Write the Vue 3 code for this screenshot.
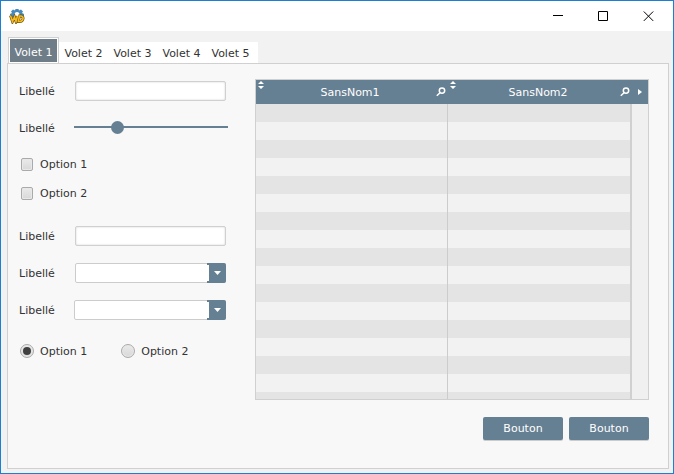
<script setup>
import { ref } from 'vue'

const tabs = ['Volet 1', 'Volet 2', 'Volet 3', 'Volet 4', 'Volet 5']
const activeTab = ref(0)
const columns = ['SansNom1', 'SansNom2']
const rowCount = 17
const name = ref('')
const level = ref(26)
const checks = ref([false, false])
const detail = ref('')
const firstChoice = ref('')
const secondChoice = ref('')
const radio = ref(1)
</script>

<template>
  <div class="window">
    <header class="titlebar">
      <svg class="logo" viewBox="0 0 16 16" aria-hidden="true">
        <path
          d="M6.500 1H9.500L10 2.500L12 1.500L14 3.500L13 5L15 6V8.500L13 9H3L1 8.500V6L3 5L2 3.500L4 1.500L6 2.500Z"
          fill="#4589bd"
        />
        <circle cx="8" cy="6.500" r="2.500" fill="#fff" />
        <path d="M1.500 7.500L3.500 13.500L5.500 9L7 13.500L8.500 8M9.500 8H12C15.200 8 14.700 13.500 10.500 13.500H9.300L10.500 8" fill="none" stroke="#654b08" stroke-width="2.800" />
        <path d="M1.500 7.500L3.500 13.500L5.500 9L7 13.500L8.500 8M9.500 8H12C15.200 8 14.700 13.500 10.500 13.500H9.300L10.500 8" fill="none" stroke="#f6bb20" stroke-width="1.600" />
      </svg>
      <div class="window-actions">
        <button type="button" aria-label="Réduire">
          <svg viewBox="0 0 11 11"><path d="M0 4.500H10" /></svg>
        </button>
        <button type="button" aria-label="Agrandir">
          <svg viewBox="0 0 11 11"><path d="M.5.5H9.500V9.500H.5Z" /></svg>
        </button>
        <button type="button" aria-label="Fermer">
          <svg viewBox="0 0 11 11"><path d="M.8.5L10.200 9.900M10.200.5L.8 9.900" /></svg>
        </button>
      </div>
    </header>

    <main class="body">
      <nav class="tabs" role="tablist">
        <button
          v-for="(tab, i) in tabs"
          :key="tab"
          type="button"
          role="tab"
          class="tab"
          :class="{ active: i === activeTab }"
          :aria-selected="i === activeTab"
          @click="activeTab = i"
        >{{ tab }}</button>
      </nav>

      <section class="panel">
        <form class="form" @submit.prevent>
          <div class="group">
            <div class="field">
              <label for="name">Libellé</label>
              <input id="name" v-model="name" class="text" type="text" />
            </div>
            <div class="field">
              <label for="level">Libellé</label>
              <input id="level" v-model="level" class="slider" type="range" min="0" max="100" />
            </div>
          </div>
          <div class="group checks">
            <label v-for="n in 2" :key="n" class="choice">
              <input v-model="checks[n - 1]" type="checkbox" /><span>Option {{ n }}</span>
            </label>
          </div>
          <div class="group details">
            <div class="field">
              <label for="detail">Libellé</label>
              <input id="detail" v-model="detail" class="text" type="text" />
            </div>
            <div class="field">
              <label for="first">Libellé</label>
              <div class="combo narrow">
                <select id="first" v-model="firstChoice"><option value=""></option></select>
                <span class="arrow"><svg viewBox="0 0 7 4"><path d="M0 0H7L3.500 4Z" /></svg></span>
              </div>
            </div>
            <div class="field">
              <label for="second">Libellé</label>
              <div class="combo">
                <select id="second" v-model="secondChoice"><option value=""></option></select>
                <span class="arrow"><svg viewBox="0 0 7 4"><path d="M0 0H7L3.500 4Z" /></svg></span>
              </div>
            </div>
          </div>
          <div class="radios">
            <label v-for="n in 2" :key="n" class="choice">
              <input v-model="radio" type="radio" name="option" :value="n" /><span>Option {{ n }}</span>
            </label>
          </div>
        </form>

        <div class="content">
          <div class="grid">
            <table>
              <colgroup>
                <col class="first" />
                <col />
                <col class="more" />
              </colgroup>
              <thead>
                <tr>
                  <th v-for="column in columns" :key="column" scope="col">
                    <div class="head">
                      <svg class="sort" viewBox="0 0 6 8"><path d="M0 3L3 0L6 3ZM0 5L3 8L6 5Z" /></svg>
                      <span>{{ column }}</span>
                      <svg class="search" viewBox="0 0 10 10">
                        <circle cx="6" cy="3.600" r="2.700" /><path d="M4 5.700L.8 8.800" />
                      </svg>
                    </div>
                  </th>
                  <th><svg class="next" viewBox="0 0 4 6"><path d="M0 0L4 3L0 6Z" /></svg></th>
                </tr>
              </thead>
              <tbody>
                <tr v-for="n in rowCount" :key="n"><td></td><td></td><td></td></tr>
              </tbody>
            </table>
          </div>
          <footer class="actions">
            <button type="button">Bouton</button>
            <button type="button">Bouton</button>
          </footer>
        </div>
      </section>
    </main>
  </div>
</template>

<style>
body {
  margin: 0;
}
</style>

<style scoped>
* {
  box-sizing: border-box;
}

.window {
  display: flex;
  flex-direction: column;
  height: 100vh;
  min-height: 440px;
  border: 1px solid #1b80d4;
  background: #f2f2f2;
  color: #333;
  font: 11px/14px Verdana, "DejaVu Sans", sans-serif;
}

button,
input,
select {
  margin: 0;
  font: inherit;
  color: inherit;
}

.titlebar {
  display: flex;
  align-items: center;
  justify-content: space-between;
  height: 30px;
  padding: 0 2px 0 8px;
  background: #fff;
}

.logo {
  width: 16px;
  height: 16px;
}

.window-actions {
  display: flex;
  height: 100%;
}

.window-actions button {
  display: flex;
  align-items: center;
  justify-content: center;
  width: 45px;
  padding: 0;
  border: 0;
  background: none;
}

.window-actions svg {
  width: 11px;
  height: 11px;
  fill: none;
  stroke: #000;
}

.body {
  display: flex;
  flex: 1;
  flex-direction: column;
  min-height: 0;
  padding: 6px 4px 4px 6px;
}

.tabs {
  display: flex;
  align-items: flex-end;
  height: 26px;
  padding-left: 1px;
}

.tab {
  height: 21px;
  width: 49px;
  padding: 2px 0 0;
  border: 0;
  background: #fff;
  white-space: nowrap;
}

.tab:last-child {
  width: 52px;
  padding-right: 3px;
}

.tab.active {
  width: 51px;
  height: 26px;
  padding: 4px 0 0;
  border: 1px solid #d0d0d0;
  border-bottom: 0;
  background: #6f7d89;
  box-shadow: inset 0 0 0 1px #fff;
  color: #fff;
}

.panel {
  display: flex;
  flex: 1;
  gap: 27px;
  min-height: 0;
  padding: 15px 19px 28px 11px;
  border: 1px solid #d0d0d0;
  background: #f8f8f8;
}

.form {
  flex: none;
  width: 209px;
  padding-top: 2px;
}

.group {
  display: flex;
  flex-direction: column;
  gap: 17px;
}

.checks {
  gap: 9px;
  margin-top: 16px;
}

.details {
  margin-top: 23px;
}

.field {
  display: grid;
  grid-template-columns: 55px 1fr;
  align-items: center;
  height: 20px;
}

.field label,
.choice span {
  padding-top: 2px;
}

.text {
  width: 151px;
  height: 20px;
  margin-left: 1px;
  padding: 0 4px;
  border: 1px solid #d0d0d0;
  border-radius: 2px;
  background: #fff;
  box-shadow: inset 0 0 2px #ccc;
}

.slider {
  align-self: start;
  width: 100%;
  height: 18px;
  appearance: none;
  background: linear-gradient(#668093, #668093) center / 100% 2px no-repeat;
}

.slider::-webkit-slider-thumb {
  width: 13px;
  height: 13px;
  appearance: none;
  border-radius: 50%;
  background: #668093;
}

.choice {
  display: flex;
  align-items: center;
  gap: 6px;
  height: 20px;
  padding-left: 1px;
}

.choice input {
  display: grid;
  place-items: center;
  width: 14px;
  height: 14px;
  appearance: none;
  border: 1px solid #aaa;
  border-radius: 50%;
  background: linear-gradient(#eaeaea, #d8d8d8);
  box-shadow: inset 0 0 0 1px #e8e8e8;
}

.choice input[type="checkbox"] {
  width: 12px;
  height: 13px;
  margin: 0 1px;
  border-radius: 2px;
}

.choice input:checked::after {
  content: "";
  width: 8px;
  height: 8px;
  border-radius: 50%;
  background: #404040;
}

.radios {
  display: flex;
  gap: 33px;
  margin-top: 21px;
}

.combo {
  display: grid;
  grid-template-columns: 1fr 19px;
  width: 152px;
  height: 20px;
}

.combo.narrow {
  width: 151px;
  margin-left: 1px;
}

.combo select {
  grid-area: 1 / 1 / 2 / 3;
  height: 20px;
  padding: 0 20px 0 4px;
  appearance: none;
  border: 1px solid #ccc;
  border-radius: 2px;
  background: #fff;
}

.arrow {
  display: flex;
  grid-area: 1 / 2;
  align-items: center;
  justify-content: center;
  padding-left: 2px;
  border-radius: 0 2px 2px 0;
  background: linear-gradient(#fff, #fff) left center / 2px 16px no-repeat #668093;
  pointer-events: none;
}

.arrow svg {
  width: 7px;
  height: 4px;
  fill: #fff;
}

.content {
  display: flex;
  flex: 1;
  flex-direction: column;
  gap: 17px;
  min-width: 0;
}

.grid {
  flex: 1 1 0;
  min-height: 0;
  overflow: hidden;
  border: 1px solid #d0d0d0;
  background: #f0f0f0;
}

table {
  width: 100%;
  table-layout: fixed;
  border-collapse: separate;
  border-spacing: 0;
}

col.first {
  width: 49%;
}

col.more {
  width: 16px;
}

th {
  height: 24px;
  padding: 0;
  background: #668093;
  color: #fff;
  font-weight: normal;
}

.head {
  display: grid;
  grid-template-columns: 8px 1fr 12px;
  align-items: center;
  height: 24px;
}

.head span {
  padding-top: 2px;
}

.sort {
  align-self: start;
  width: 6px;
  height: 8px;
  margin: 1px 2px;
  fill: #fff;
}

.search {
  width: 10px;
  height: 10px;
  fill: none;
  stroke: #fff;
  stroke-width: 1.5;
}

.next {
  display: block;
  width: 4px;
  height: 6px;
  margin: 0 auto;
  fill: #fff;
}

td {
  height: 18px;
  padding: 0;
  border-right: 1px solid #ccc;
  background: #f2f2f2;
}

td:nth-child(2) {
  border-right: 2px solid #d0d0d0;
}

tr:nth-child(odd) td {
  background: #e4e4e4;
}

tbody tr td:last-child {
  border: 0;
  background: #f0f0f0;
}

.actions {
  display: flex;
  justify-content: flex-end;
  gap: 6px;
}

.actions button {
  width: 80px;
  height: 23px;
  padding: 1px 0 0;
  border: 0;
  border-radius: 2px;
  background: #668093;
  box-shadow: 0 1px #ccc;
  color: #fff;
}
</style>
